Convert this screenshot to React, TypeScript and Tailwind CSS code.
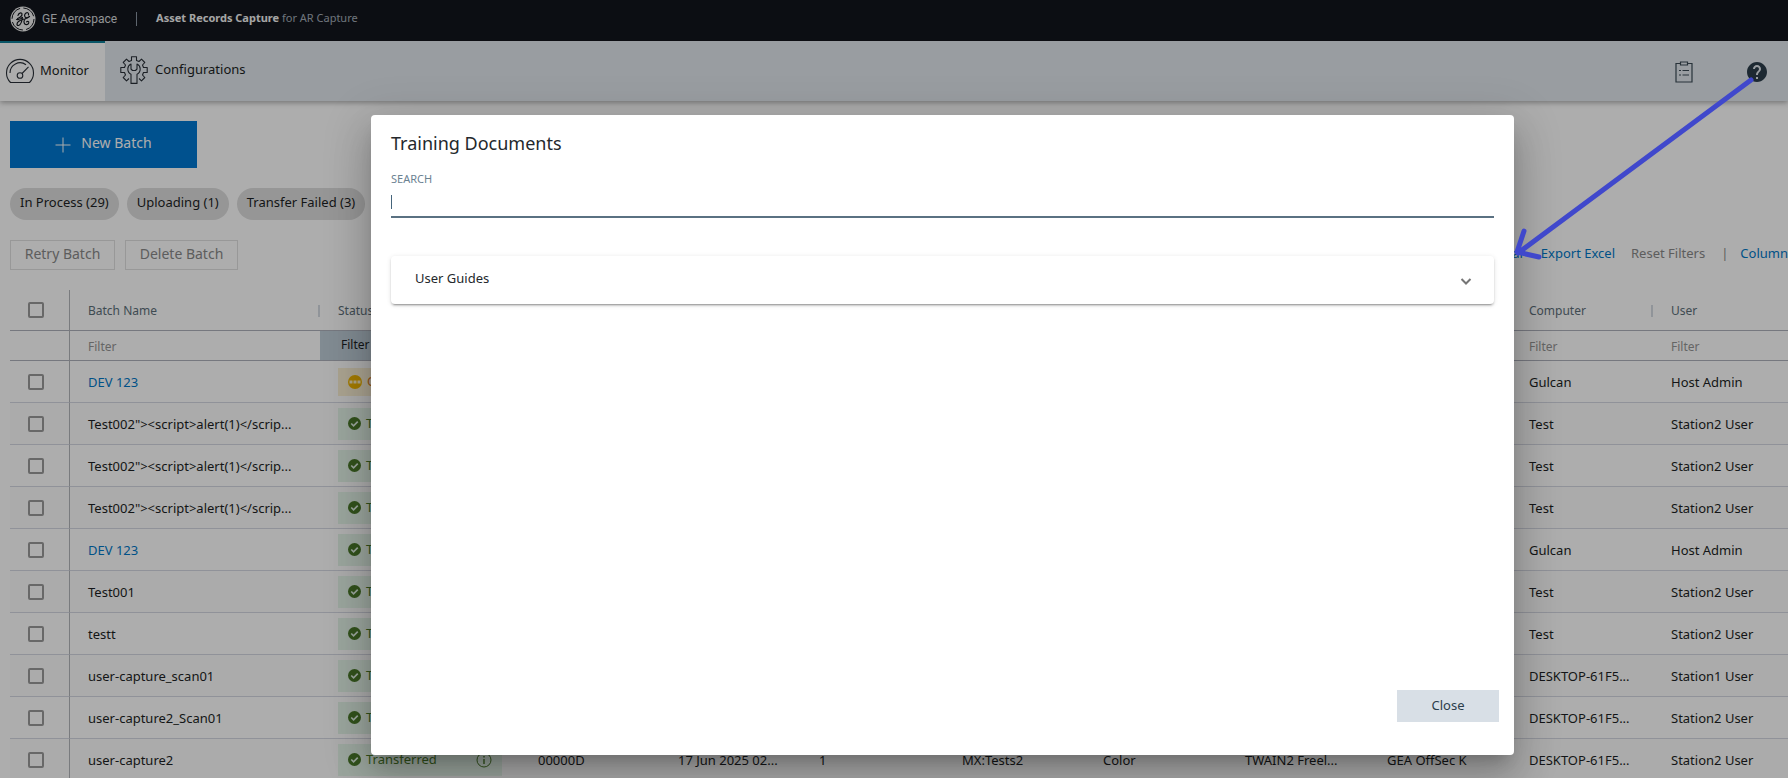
import { useState } from 'react';

type Row = { name: string; link?: boolean; status: 'open' | 'done'; cells?: string[]; computer: string; user: string };

const rows: Row[] = [
  { name: 'DEV 123', link: true, status: 'open', computer: 'Gulcan', user: 'Host Admin' },
  { name: 'Test002"><script>alert(1)</scrip...', status: 'done', computer: 'Test', user: 'Station2 User' },
  { name: 'Test002"><script>alert(1)</scrip...', status: 'done', computer: 'Test', user: 'Station2 User' },
  { name: 'Test002"><script>alert(1)</scrip...', status: 'done', computer: 'Test', user: 'Station2 User' },
  { name: 'DEV 123', link: true, status: 'done', computer: 'Gulcan', user: 'Host Admin' },
  { name: 'Test001', status: 'done', computer: 'Test', user: 'Station2 User' },
  { name: 'testt', status: 'done', computer: 'Test', user: 'Station2 User' },
  { name: 'user-capture_scan01', status: 'done', computer: 'DESKTOP-61F5...', user: 'Station1 User' },
  { name: 'user-capture2_Scan01', status: 'done', computer: 'DESKTOP-61F5...', user: 'Station2 User' },
  {
    name: 'user-capture2',
    status: 'done',
    cells: ['00000D', '17 Jun 2025 02...', '1', 'MX:Tests2', 'Color', 'TWAIN2 Freel...', 'GEA OffSec K'],
    computer: 'DESKTOP-61F5...',
    user: 'Station2 User',
  },
];

const emptyCells = ['', '', '', '', '', '', ''];
const chips = ['In Process (29)', 'Uploading (1)', 'Transfer Failed (3)'];

function GeLogo() {
  return (
    <svg viewBox="0 0 26 26" className="size-[26px]" aria-hidden="true">
      <circle cx="13" cy="13" r="12.5" fill="#f0f0f0" />
      <circle cx="13" cy="13" r="11" fill="none" stroke="#13161d" strokeWidth="1" strokeDasharray="14 3.28" />
      <g fill="none" stroke="#13161d" strokeWidth="1.2" strokeLinecap="round">
        <path d="M8 9.500c.5-2.500 3.500-3.500 4-1.500.4 2-2.500 4-4.500 4.500" />
        <path d="M6.500 13.500c2.500.5 5-1 6-2.500-.5 4-1.500 8-4 8.500-2 .3-2-2.500 0-4s4-2 5.500-2.500" />
        <path d="M18.500 9c.5-2-1-3-2.500-2-2 1.300-2 4.500.5 4.800 1.500.1 2.500-.8 3-1.300" />
        <path d="M17 12c-2.500.5-3.500 3-2.800 5 .8 2.300 3.800 2 4.500 0 .4-1.500-1-2-2-1.200" />
      </g>
    </svg>
  );
}

function GaugeIcon() {
  return (
    <svg viewBox="0 0 30 26" className="h-[26px] w-[30px]" fill="none" stroke="#2a3038" strokeWidth="1.1" aria-hidden="true">
      <path d="M5.500 24.500A13.500 13.500 0 1 1 24.500 24.500Z" strokeLinejoin="round" />
      <path d="M5 15A10 10 0 0 1 21 6.800" />
      <circle cx="15" cy="17.500" r="2.800" />
      <path d="M17 15.500L23.500 8.800" />
    </svg>
  );
}

function GearIcon() {
  return (
    <svg viewBox="0 0 28 28" className="size-7" fill="none" stroke="#2a3038" strokeWidth="1.1" strokeLinejoin="round" aria-hidden="true">
      <path d="M9 22.500L6.500 24.800 3.200 21.500 5.500 19 4.500 16.500H.8v-5h3.700L5.500 9 3.200 6.500 6.500 3.200 9 5.500l2.500-1V.8h5v3.700l2.500 1 2.500-2.300 3.300 3.300L22.500 9l1 2.500h3.700v5h-3.700l-1 2.500 2.300 2.500-3.300 3.300L19 22.500" />
      <path d="M11 27.400V18.200C8.500 17 7.800 15 7.800 13c0-2.300 1.200-4 3.200-5v5l1.500 1.500h3L17 13V8c2 1 3.200 2.700 3.200 5 0 2-.7 4-3.200 5.200v9.200z" />
    </svg>
  );
}

function ClipboardIcon() {
  return (
    <svg viewBox="0 0 18 22" className="h-[22px] w-[18px]" fill="none" stroke="#3b4a55" strokeWidth="1.200" aria-hidden="true">
      <path d="M5 2.500H1v18.500h16V2.500h-4" />
      <path d="M5.500 1h7v3h-7z" />
      <path d="M4 9.500h2M7.500 9.500h6.500M4 14h2M7.500 14h6.500" />
    </svg>
  );
}

function HelpIcon() {
  return (
    <svg viewBox="0 0 24 24" className="size-6" aria-hidden="true">
      <path
        fill="#2b3d4b"
        d="M12 2C6.480 2 2 6.480 2 12s4.480 10 10 10 10-4.480 10-10S17.520 2 12 2zm1 17h-2v-2h2v2zm2.070-7.750l-.9.920C13.450 12.900 13 13.500 13 15h-2v-.5c0-1.100.45-2.100 1.170-2.830l1.240-1.260c.37-.36.59-.86.59-1.410 0-1.100-.9-2-2-2s-2 .9-2 2H8c0-2.210 1.790-4 4-4s4 1.790 4 4c0 .88-.36 1.680-.93 2.250z"
      />
    </svg>
  );
}

function StatusBadge({ status }: { status: Row['status'] }) {
  if (status === 'open') {
    return (
      <span className="flex h-7 w-[164px] items-center gap-[5px] bg-[#fbf0d4] px-[10px] text-[#d97a1c]">
        <svg viewBox="0 0 14 14" className="size-[14px] shrink-0" aria-hidden="true">
          <circle cx="7" cy="7" r="7" fill="#f2b600" />
          <path d="M1.500 5.500h3v3h-3zM5.500 5.500h3v3h-3zM9.500 5.500h3v3h-3z" fill="#fff3d0" />
        </svg>
        Open
      </span>
    );
  }
  return (
    <span className="flex h-8 w-[164px] items-center gap-[5px] bg-[#e5f5e9] px-[10px] text-[#4a7a2a]">
      <svg viewBox="0 0 14 14" className="size-[13px] shrink-0" aria-hidden="true">
        <circle cx="7" cy="7" r="7" fill="#4a7a2a" />
        <path d="M3.500 7l2.500 2.500 4.500-4.500" fill="none" stroke="#e4f3e6" strokeWidth="1.800" />
      </svg>
      Transferred
      <svg viewBox="0 0 16 16" className="ml-auto size-4" fill="none" stroke="currentColor" aria-hidden="true">
        <circle cx="8" cy="8" r="7" />
        <path d="M8 7v5M8 4v1.500" strokeWidth="1.400" />
      </svg>
    </span>
  );
}

function CheckBox({ label }: { label: string }) {
  return (
    <input
      type="checkbox"
      aria-label={label}
      className="ml-[18px] block size-4 appearance-none rounded-[2px] border-2 border-[#9a9a9a]"
    />
  );
}

function HeadCell({ children, last }: { children?: string; last?: boolean }) {
  return (
    <th className="border-b border-[#afb1bb] p-0 pt-[2px] font-normal">
      <div className="flex items-center justify-between pl-[18px]">
        <span>{children}</span>
        {!last && <span className="h-3 w-[2px] bg-[#d5dbe2]" />}
      </div>
    </th>
  );
}

function FilterCell({ label }: { label: string }) {
  return (
    <td className="border-b border-[#afb1bb] p-0 pt-[2px]">
      <input
        aria-label={label}
        placeholder="Filter"
        className="block w-full bg-transparent pl-[18px] outline-none placeholder:text-[#969696]"
      />
    </td>
  );
}

function BatchTable() {
  const base = 'border-b border-[#d5d8e2] p-0 pl-[18px]';
  const cell = `${base} pt-[2px] truncate`;
  return (
    <table className="mt-5 w-full table-fixed border-separate border-spacing-0 text-left">
      <colgroup>
        <col className="w-[60px]" />
        <col className="w-[250px]" />
        <col className="w-[200px]" />
        <col className="w-[140px]" />
        <col className="w-[141px]" />
        <col className="w-[143px]" />
        <col className="w-[141px]" />
        <col className="w-[142px]" />
        <col className="w-[142px]" />
        <col className="w-[142px]" />
        <col className="w-[142px]" />
        <col />
      </colgroup>
      <thead>
        <tr className="h-[41px] text-[12px] text-[#5d6f7a]">
          <th className="border-r border-b border-r-[#b3b5ba] border-b-[#afb1bb] p-0">
            <CheckBox label="Select all" />
          </th>
          <HeadCell>Batch Name</HeadCell>
          <HeadCell>Status</HeadCell>
          {emptyCells.map((_, i) => (
            <HeadCell key={i} />
          ))}
          <HeadCell>Computer</HeadCell>
          <HeadCell last>User</HeadCell>
        </tr>
        <tr className="h-[30px] text-[12px]">
          <td className="border-r border-b border-r-[#b3b5ba] border-b-[#afb1bb]" />
          <FilterCell label="Filter batch name" />
          <td className="border-b border-[#afb1bb] bg-[#bfcdd7] p-0">
            <button type="button" className="block pb-[2px] pl-[21px]">Filter</button>
          </td>
          {emptyCells.map((_, i) => (
            <td key={i} className="border-b border-[#afb1bb]" />
          ))}
          <FilterCell label="Filter computer" />
          <FilterCell label="Filter user" />
        </tr>
      </thead>
      <tbody>
        {rows.map((row, i) => (
          <tr key={i} className="h-[42px] odd:bg-white even:bg-[#fcfcfc]">
            <td className="border-r border-b border-r-[#b3b5ba] border-b-[#d5d8e2] p-0">
              <CheckBox label={`Select ${row.name}`} />
            </td>
            <td className={cell}>
              {row.link ? <a href="#batch" className="text-[#0078c8]">{row.name}</a> : row.name}
            </td>
            <td className={base}>
              <StatusBadge status={row.status} />
            </td>
            {(row.cells ?? emptyCells).map((text, j) => (
              <td key={j} className={cell}>{text}</td>
            ))}
            <td className={cell}>{row.computer}</td>
            <td className={cell}>{row.user}</td>
          </tr>
        ))}
      </tbody>
    </table>
  );
}

function TrainingDialog() {
  const [query, setQuery] = useState('');

  return (
    <div className="absolute inset-0 flex bg-black/32 pt-[115px] pr-[274px] pb-[23px] pl-[371px]">
      <div
        role="dialog"
        aria-labelledby="training-title"
        className="flex grow flex-col rounded bg-white px-5 pt-4 pb-[33px] shadow-[0_11px_15px_-7px_rgba(0,0,0,0.2),0_24px_38px_3px_rgba(0,0,0,0.14),0_9px_46px_8px_rgba(0,0,0,0.12)]"
      >
        <h2 id="training-title" className="text-[18px] leading-6 text-[#24282c]">Training Documents</h2>
        <label htmlFor="search" className="mt-4 text-[11px] leading-4 text-[#6b8292]">SEARCH</label>
        <div className="relative">
          <input
            id="search"
            value={query}
            onChange={(e) => setQuery(e.target.value)}
            className="block h-[31px] w-full border-b-2 border-[#5a7182] text-[13px] outline-none"
          />
          {!query && <span className="absolute top-2 left-0 h-[14px] w-px bg-[#45647b]" />}
        </div>
        <button
          type="button"
          className="mt-[38px] flex h-12 items-center justify-between rounded pr-5 pb-[2px] pl-6 text-[13px] text-[#24282c] shadow-[0_3px_1px_-2px_rgba(0,0,0,0.2),0_2px_2px_0_rgba(0,0,0,0.14),0_1px_5px_0_rgba(0,0,0,0.12)]"
        >
          User Guides
          <svg viewBox="0 0 16 16" className="mt-1 size-4" fill="none" stroke="#757575" strokeWidth="2" aria-hidden="true">
            <path d="M3.500 6L8 10.500 12.500 6" />
          </svg>
        </button>
        <button type="button" className="-mr-[5px] mt-auto h-8 w-[102px] self-end bg-[#d8dfe6] text-[13px] text-[#2b3d4b]">
          Close
        </button>
      </div>
    </div>
  );
}

export default function App() {
  return (
    <div className="relative h-screen overflow-hidden bg-white font-['Noto_Sans',sans-serif] text-[13px] text-[#1c1f24]">
      <header className="flex h-[41px] items-center bg-[#13161d] pb-1 pl-[10px]">
        <GeLogo />
        <span className="ml-[6px] font-['Roboto',sans-serif] text-[12px] text-[#d8dade]">GE Aerospace</span>
        <span className="mx-[19px] h-[14px] w-px bg-[#8b95a3]" />
        <h1 className="text-[11px] text-[#a4adb8]">
          <b className="text-[#f4f4f4]">Asset Records Capture</b> for AR Capture
        </h1>
      </header>

      <nav className="flex h-[60px] items-stretch bg-[#e2e8ee] shadow-[0_2px_5px_rgba(0,0,0,0.3)]">
        <a href="#monitor" className="flex w-[105px] items-center gap-[5px] border-t-2 border-[#0f7f99] bg-white pb-[2px] pl-[5px]">
          <GaugeIcon />
          Monitor
        </a>
        <a href="#configurations" className="flex items-center gap-[7px] pb-[3px] pl-[15px]">
          <GearIcon />
          Configurations
        </a>
        <div className="ml-auto flex items-center gap-[52px] pt-[2px] pr-[19px]">
          <button type="button" aria-label="Tasks"><ClipboardIcon /></button>
          <button type="button" aria-label="Help"><HelpIcon /></button>
        </div>
      </nav>

      <main className="pt-5 pl-[10px]">
        <button type="button" className="flex h-[47px] w-[187px] items-center justify-center gap-[10px] bg-[#0078d1] pb-1 text-[14px] text-white">
          <svg viewBox="0 0 16 16" className="mt-1 size-4" stroke="currentColor" aria-hidden="true">
            <path d="M8 .5v15M.5 8h15" />
          </svg>
          New Batch
        </button>

        <div className="mt-5 flex gap-2">
          {chips.map((chip) => (
            <button key={chip} type="button" className="h-8 rounded-full bg-[#dedede] px-[10px] pb-[3px]">{chip}</button>
          ))}
        </div>

        <div className="mt-5 flex items-center justify-between text-[14px]">
          <div className="flex gap-[10px] text-[#8a8a8a]">
            <button type="button" className="h-[30px] w-[105px] border border-[#e0e0e0] pb-[3px]">Retry Batch</button>
            <button type="button" className="h-[30px] w-[113px] border border-[#e0e0e0] pb-[3px]">Delete Batch</button>
          </div>
          <div className="flex gap-4 pb-[2px] text-[13px] text-[#0078c8]">
            <button type="button">Clear</button>
            <button type="button">Export Excel</button>
            <button type="button" className="text-[#8a8a8a]">Reset Filters</button>
            <span className="-mr-1 text-[#8a8a8a]">|</span>
            <button type="button">Column</button>
          </div>
        </div>

        <BatchTable />
      </main>

      <TrainingDialog />

      <svg viewBox="0 0 240 190" className="absolute top-[74px] right-[34px] h-[190px] w-[240px]" fill="none" stroke="#4048cc" strokeWidth="5" strokeLinecap="round" strokeLinejoin="round" aria-hidden="true">
        <path d="M237 6L4 179M10 157L3 178L25 183" />
      </svg>
    </div>
  );
}
